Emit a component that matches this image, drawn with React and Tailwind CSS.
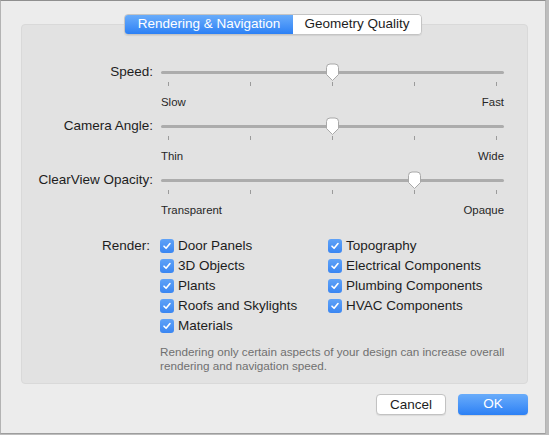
import React from 'react';

const sliders = [
  { label: 'Speed:', min: 'Slow', max: 'Fast', at: 171 },
  { label: 'Camera Angle:', min: 'Thin', max: 'Wide', at: 171 },
  { label: 'ClearView Opacity:', min: 'Transparent', max: 'Opaque', at: 253 },
];

const left = ['Door Panels', '3D Objects', 'Plants', 'Roofs and Skylights', 'Materials'];
const right = ['Topography', 'Electrical Components', 'Plumbing Components', 'HVAC Components'];

function Thumb({ x }) {
  return (
    <svg
      width="15"
      height="19"
      viewBox="0 0 15 19"
      className="absolute top-[1px]"
      style={{ left: x - 7.5 }}
    >
      <path
        d="M1.5 4.5 Q1.5 1 5 1 H10 Q13.5 1 13.5 4.5 V11.5 L7.5 17.5 L1.5 11.5 Z"
        fill="#ffffff"
        stroke="#a9a9a9"
        strokeWidth="1"
      />
    </svg>
  );
}

function Slider({ label, min, max, at }) {
  return (
    <div className="h-[54px]">
      <div className="flex h-[20px] items-center">
        <div className="w-[131px] text-right text-[13.5px] text-[#1d1d1d]">{label}</div>
        <div className="relative ml-[8px] h-[20px] w-[343px]">
          <div className="absolute left-0 right-0 top-[9px] h-[3px] rounded-full bg-[#acacac]" />
          <Thumb x={at} />
        </div>
      </div>
      <div className="ml-[139px] flex w-[343px] justify-between px-[7px]">
        {[0, 1, 2, 3, 4].map((i) => (
          <div key={i} className="h-[4px] w-px bg-[#9b9b9b]" />
        ))}
      </div>
      <div className="ml-[139px] mt-[9px] flex h-[16px] w-[343px] items-center justify-between text-[11.4px] text-[#262626]">
        <span>{min}</span>
        <span>{max}</span>
      </div>
    </div>
  );
}

function Check({ text }) {
  return (
    <div className="flex h-[20px] items-center">
      <div className="flex h-[14px] w-[14px] items-center justify-center rounded-[3px] bg-gradient-to-b from-[#5fa2f7] to-[#3a86f2]">
        <svg width="10" height="10" viewBox="0 0 10 10">
          <path d="M2 5.2 L4.1 7.3 L8 2.6" fill="none" stroke="#ffffff" strokeWidth="1.6" strokeLinecap="round" strokeLinejoin="round" />
        </svg>
      </div>
      <span className="ml-[4px] text-[13.5px] text-[#1d1d1d]">{text}</span>
    </div>
  );
}

export default function App() {
  return (
    <div
      className="h-[435px] w-[549px] bg-[#bdbdbd]"
      style={{ fontFamily: '"Liberation Sans", Arial, sans-serif' }}
    >
      <div className="flex h-[434px] w-[546px] flex-col border-x border-b border-t border-x-[#b3b3b3] border-b-[#9d9d9d] border-t-[#8f8f8f] bg-[#ececec]">
        <div className="ml-[20px] mt-[23px] h-[360px] w-[507px] rounded-[4px] border border-[#d9d9d9] bg-[#e2e2e2]">
          <div className="-mt-[11px] flex justify-center pr-[3px]">
            <div className="flex h-[21px] overflow-hidden rounded-[4px] border border-[#c4c4c4] shadow-[0_1px_1px_rgba(0,0,0,0.08)]">
              <div className="flex w-[168px] items-center justify-center bg-gradient-to-b from-[#69acfa] to-[#2b80f5] text-[13.5px] text-white">
                Rendering &amp; Navigation
              </div>
              <div className="flex w-[128px] items-center justify-center bg-white text-[13.5px] text-[#1d1d1d]">
                Geometry Quality
              </div>
            </div>
          </div>

          <div className="mt-[27px]">
            {sliders.map((s) => (
              <Slider key={s.label} {...s} />
            ))}
          </div>

          <div className="mt-[12px] flex">
            <div className="flex h-[20px] w-[128px] items-center justify-end text-[13.5px] text-[#1d1d1d]">Render:</div>
            <div className="ml-[10px] w-[168px]">
              {left.map((t) => (
                <Check key={t} text={t} />
              ))}
            </div>
            <div>
              {right.map((t) => (
                <Check key={t} text={t} />
              ))}
            </div>
          </div>

          <p className="ml-[138px] mt-[9px] w-[365px] text-[11.7px] leading-[14px] text-[#707070]">
            Rendering only certain aspects of your design can increase overall rendering and navigation speed.
          </p>
        </div>

        <div className="mr-[17px] mt-[10px] flex justify-end gap-[12px]">
          <button className="h-[21px] w-[70px] rounded-[4px] border border-[#c2c2c2] bg-white text-[13.5px] text-[#1d1d1d] shadow-[0_1px_1px_rgba(0,0,0,0.08)]">
            Cancel
          </button>
          <button className="h-[21px] w-[70px] rounded-[4px] bg-gradient-to-b from-[#69acfa] to-[#2b80f5] text-[13.5px] text-white shadow-[0_1px_1px_rgba(0,0,0,0.12)]">
            OK
          </button>
        </div>
      </div>
    </div>
  );
}
